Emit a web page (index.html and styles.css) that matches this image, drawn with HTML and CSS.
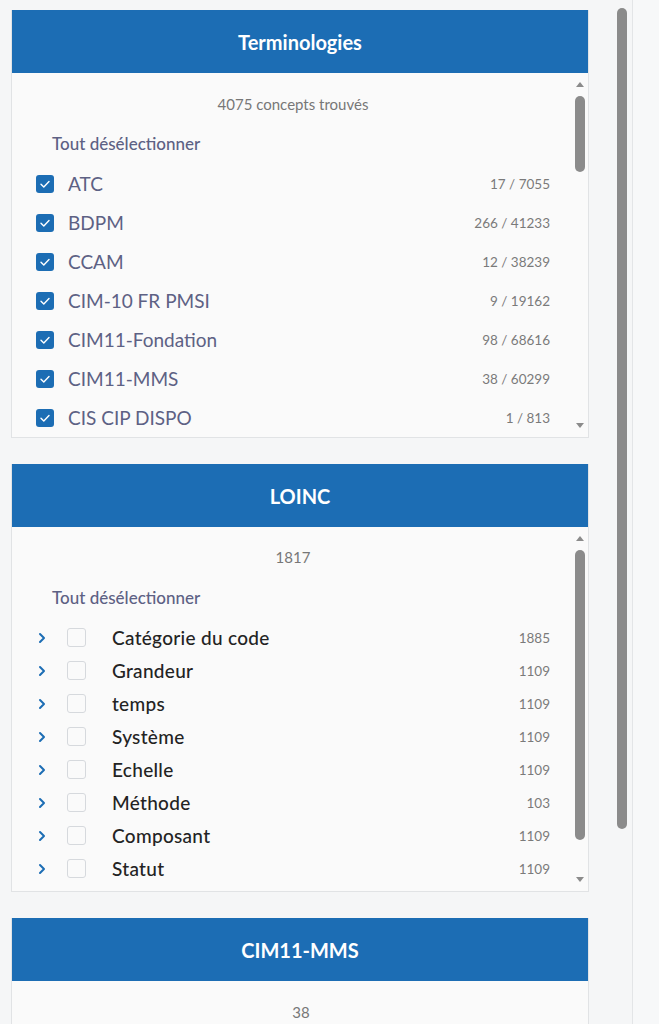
FILE: index.html
```html
<!DOCTYPE html>
<html lang="fr">
<head>
    <meta charset="UTF-8">
    <meta name="viewport" content="width=device-width, initial-scale=1.0">
    <title>Terminologies</title>
    <link rel="stylesheet" href="styles.css">
</head>
<body>
    <div class="panel">
        <div class="cards">
            <div class="card">
                <div class="card-header">Terminologies</div>
                <div class="card-body body-tall">
                    <div class="list">
                        <div class="total">4075 concepts trouvés</div>
                        <div class="toggle-all">Tout désélectionner</div>
                        <div class="term-row">
                            <span class="check checked"><svg width="18" height="18" viewBox="0 0 18 18"><path d="M5 9.2 L7.8 12 L13 6.6" fill="none" stroke="#fff" stroke-width="1.4" stroke-linecap="round" stroke-linejoin="round"/></svg></span>
                            <span class="term-name">ATC</span>
                            <span class="count">17 / 7055</span>
                        </div>
                        <div class="term-row">
                            <span class="check checked"><svg width="18" height="18" viewBox="0 0 18 18"><path d="M5 9.2 L7.8 12 L13 6.6" fill="none" stroke="#fff" stroke-width="1.4" stroke-linecap="round" stroke-linejoin="round"/></svg></span>
                            <span class="term-name">BDPM</span>
                            <span class="count">266 / 41233</span>
                        </div>
                        <div class="term-row">
                            <span class="check checked"><svg width="18" height="18" viewBox="0 0 18 18"><path d="M5 9.2 L7.8 12 L13 6.6" fill="none" stroke="#fff" stroke-width="1.4" stroke-linecap="round" stroke-linejoin="round"/></svg></span>
                            <span class="term-name">CCAM</span>
                            <span class="count">12 / 38239</span>
                        </div>
                        <div class="term-row">
                            <span class="check checked"><svg width="18" height="18" viewBox="0 0 18 18"><path d="M5 9.2 L7.8 12 L13 6.6" fill="none" stroke="#fff" stroke-width="1.4" stroke-linecap="round" stroke-linejoin="round"/></svg></span>
                            <span class="term-name">CIM-10 FR PMSI</span>
                            <span class="count">9 / 19162</span>
                        </div>
                        <div class="term-row">
                            <span class="check checked"><svg width="18" height="18" viewBox="0 0 18 18"><path d="M5 9.2 L7.8 12 L13 6.6" fill="none" stroke="#fff" stroke-width="1.4" stroke-linecap="round" stroke-linejoin="round"/></svg></span>
                            <span class="term-name">CIM11-Fondation</span>
                            <span class="count">98 / 68616</span>
                        </div>
                        <div class="term-row">
                            <span class="check checked"><svg width="18" height="18" viewBox="0 0 18 18"><path d="M5 9.2 L7.8 12 L13 6.6" fill="none" stroke="#fff" stroke-width="1.4" stroke-linecap="round" stroke-linejoin="round"/></svg></span>
                            <span class="term-name">CIM11-MMS</span>
                            <span class="count">38 / 60299</span>
                        </div>
                        <div class="term-row">
                            <span class="check checked"><svg width="18" height="18" viewBox="0 0 18 18"><path d="M5 9.2 L7.8 12 L13 6.6" fill="none" stroke="#fff" stroke-width="1.4" stroke-linecap="round" stroke-linejoin="round"/></svg></span>
                            <span class="term-name">CIS CIP DISPO</span>
                            <span class="count">1 / 813</span>
                        </div>
                    </div>
                    <div class="scroll">
                        <span class="arrow-up"></span>
                        <span class="thumb thumb-short"></span>
                        <span class="arrow-down"></span>
                    </div>
                </div>
            </div>

            <div class="card">
                <div class="card-header">LOINC</div>
                <div class="card-body body-tall">
                    <div class="list">
                        <div class="total total-loinc">1817</div>
                        <div class="toggle-all toggle-loinc">Tout désélectionner</div>
                        <div class="tree-row">
                            <svg class="chevron" width="10" height="12" viewBox="0 0 10 12"><path d="M3 2 L7 6 L3 10" fill="none" stroke="#1c6db4" stroke-width="2" stroke-linecap="round" stroke-linejoin="round"/></svg>
                            <span class="check"></span>
                            <span class="tree-name">Catégorie du code</span>
                            <span class="count">1885</span>
                        </div>
                        <div class="tree-row">
                            <svg class="chevron" width="10" height="12" viewBox="0 0 10 12"><path d="M3 2 L7 6 L3 10" fill="none" stroke="#1c6db4" stroke-width="2" stroke-linecap="round" stroke-linejoin="round"/></svg>
                            <span class="check"></span>
                            <span class="tree-name">Grandeur</span>
                            <span class="count">1109</span>
                        </div>
                        <div class="tree-row">
                            <svg class="chevron" width="10" height="12" viewBox="0 0 10 12"><path d="M3 2 L7 6 L3 10" fill="none" stroke="#1c6db4" stroke-width="2" stroke-linecap="round" stroke-linejoin="round"/></svg>
                            <span class="check"></span>
                            <span class="tree-name">temps</span>
                            <span class="count">1109</span>
                        </div>
                        <div class="tree-row">
                            <svg class="chevron" width="10" height="12" viewBox="0 0 10 12"><path d="M3 2 L7 6 L3 10" fill="none" stroke="#1c6db4" stroke-width="2" stroke-linecap="round" stroke-linejoin="round"/></svg>
                            <span class="check"></span>
                            <span class="tree-name">Système</span>
                            <span class="count">1109</span>
                        </div>
                        <div class="tree-row">
                            <svg class="chevron" width="10" height="12" viewBox="0 0 10 12"><path d="M3 2 L7 6 L3 10" fill="none" stroke="#1c6db4" stroke-width="2" stroke-linecap="round" stroke-linejoin="round"/></svg>
                            <span class="check"></span>
                            <span class="tree-name">Echelle</span>
                            <span class="count">1109</span>
                        </div>
                        <div class="tree-row">
                            <svg class="chevron" width="10" height="12" viewBox="0 0 10 12"><path d="M3 2 L7 6 L3 10" fill="none" stroke="#1c6db4" stroke-width="2" stroke-linecap="round" stroke-linejoin="round"/></svg>
                            <span class="check"></span>
                            <span class="tree-name">Méthode</span>
                            <span class="count">103</span>
                        </div>
                        <div class="tree-row">
                            <svg class="chevron" width="10" height="12" viewBox="0 0 10 12"><path d="M3 2 L7 6 L3 10" fill="none" stroke="#1c6db4" stroke-width="2" stroke-linecap="round" stroke-linejoin="round"/></svg>
                            <span class="check"></span>
                            <span class="tree-name">Composant</span>
                            <span class="count">1109</span>
                        </div>
                        <div class="tree-row">
                            <svg class="chevron" width="10" height="12" viewBox="0 0 10 12"><path d="M3 2 L7 6 L3 10" fill="none" stroke="#1c6db4" stroke-width="2" stroke-linecap="round" stroke-linejoin="round"/></svg>
                            <span class="check"></span>
                            <span class="tree-name">Statut</span>
                            <span class="count">1109</span>
                        </div>
                        <div class="tree-row">
                            <span class="chevron-space"></span>
                            <span class="check"></span>
                            <span class="tree-name">Utilisation courante</span>
                        </div>
                    </div>
                    <div class="scroll">
                        <span class="arrow-up"></span>
                        <span class="thumb thumb-long"></span>
                        <span class="arrow-down"></span>
                    </div>
                </div>
            </div>

            <div class="card">
                <div class="card-header">CIM11-MMS</div>
                <div class="card-body">
                    <div class="list">
                        <div class="total">38</div>
                    </div>
                </div>
            </div>
        </div>
        <div class="page-scroll"></div>
    </div>
    <div class="side"></div>
</body>
</html>
```

FILE: styles.css
```css
body {
    margin: 0;
    height: 1024px;
    overflow: hidden;
    display: flex;
    background-color: #f5f6f7;
    font-family: Lato, "Noto Sans", sans-serif;
}
.panel {
    display: flex;
    width: 632px;
    flex-shrink: 0;
}
.cards {
    margin: 10px 0 0 11px;
    width: 578px;
    display: flex;
    flex-direction: column;
    gap: 26px;
}
.page-scroll {
    margin: 8px 0 0 28px;
    width: 10px;
    height: 821px;
    border-radius: 5px;
    background-color: #8b8b8b;
}
.side {
    flex: 1;
    border-left: 1px solid #e3e5e7;
    background-color: #f7f8f9;
}

.card {
    background-color: #fafafa;
    border: 1px solid #e1e3e5;
    border-top: none;
    flex-shrink: 0;
}
.card-header {
    height: 63px;
    display: flex;
    align-items: center;
    justify-content: center;
    background-color: #1c6db4;
    color: #fff;
    font-size: 20px;
    font-weight: 700;
}
.card-body {
    display: flex;
    height: 120px;
}
.body-tall {
    height: 364px;
}
.list {
    flex: 1;
    overflow: hidden;
    padding: 0 22px 0 24px;
}
.total {
    margin-top: 21px;
    line-height: 20px;
    text-align: center;
    font-size: 15px;
    color: #777;
}
.total-loinc {
    margin-top: 20px;
}
.toggle-all {
    margin: 19px 0 9px 16px;
    line-height: 22px;
    font-size: 17px;
    font-weight: 500;
    color: #5d6184;
}
.toggle-loinc {
    margin: 20px 0 12px 16px;
}

.term-row {
    height: 39px;
    display: flex;
    align-items: center;
}
.check {
    width: 18px;
    height: 18px;
    border-radius: 3px;
    box-sizing: border-box;
    border: 1px solid #d6d9dd;
    background-color: #fff;
    flex-shrink: 0;
}
.check.checked {
    border: none;
    background-color: #1c6db4;
}
.check svg {
    display: block;
}
.term-name {
    margin-left: 14px;
    font-size: 19px;
    color: #5d6184;
}
.count {
    margin-left: auto;
    font-size: 13.5px;
    color: #7a7a7a;
}

.tree-row {
    height: 33px;
    display: flex;
    align-items: center;
}
.chevron {
    margin-left: 1px;
    flex-shrink: 0;
}
.chevron-space {
    width: 11px;
    flex-shrink: 0;
}
.tree-row .check {
    width: 19px;
    height: 19px;
    margin-left: 20px;
    background-color: #fafafa;
}
.tree-name {
    margin-left: 26px;
    font-size: 19px;
    font-weight: 500;
    letter-spacing: 0.3px;
    color: #232323;
}

.scroll {
    width: 16px;
    display: flex;
    flex-direction: column;
    align-items: center;
    padding: 9px 0 9px;
    box-sizing: border-box;
}
.arrow-up,
.arrow-down {
    width: 0;
    height: 0;
    border-left: 4px solid transparent;
    border-right: 4px solid transparent;
}
.arrow-up {
    border-bottom: 5px solid #8b8b8b;
}
.arrow-down {
    margin-top: auto;
    border-top: 5px solid #8b8b8b;
}
.thumb {
    margin-top: 9px;
    width: 10px;
    border-radius: 5px;
    background-color: #8b8b8b;
}
.thumb-short {
    height: 76px;
}
.thumb-long {
    height: 290px;
}
```
